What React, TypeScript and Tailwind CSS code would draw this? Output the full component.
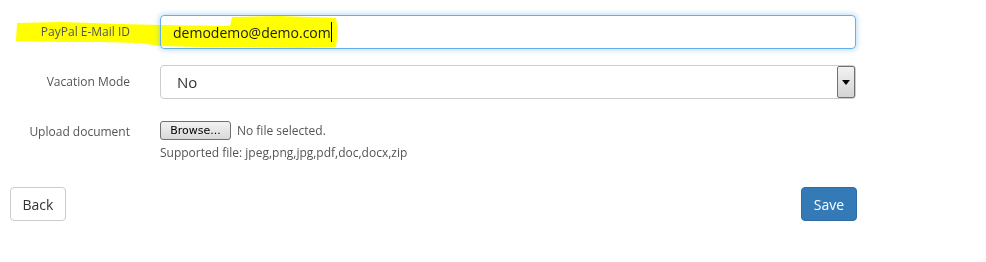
import React from "react";

const font = { fontFamily: '"Open Sans", "Noto Sans", sans-serif' };

function Label({ children }: { children: React.ReactNode }) {
  return (
    <div className="w-[145px] shrink-0 pr-[15px] text-right text-[12px] text-[#555]">
      {children}
    </div>
  );
}

export default function App() {
  return (
    <div className="relative w-[986px] h-[262px] bg-white font-['Open_Sans',sans-serif]" style={font}>
      {/* highlighter marks */}
      <svg className="absolute left-0 top-0 pointer-events-none mix-blend-multiply" width="360" height="60">
        <path
          d="M17 23 L60 22 L120 24 L160 25 L230 26 L232 17 L280 16 L336 18 L338 30 L336 47 L300 48 L240 47 L200 47 L160 46 L140 43 L100 42 L60 42 L16 41 Z"
          fill="#ffff00"
        />
      </svg>

      <div className="relative flex flex-col pt-[15px]">
        <div className="flex items-center h-[34px]">
          <Label>PayPal E-Mail ID</Label>
          <div className="w-[696px] ml-[15px] h-[34px] rounded-[4px] border border-[#66afe9] shadow-[0_0_6px_rgba(102,175,233,0.6)] flex items-center px-[12px] text-[14px] text-[#333]">
            <span className="text-[#1a1a1a]">demodemo@demo.com</span>
            <span className="w-px h-[20px] bg-black" />
          </div>
        </div>

        <div className="flex items-center h-[34px] mt-[16px]">
          <Label>Vacation Mode</Label>
          <div className="w-[696px] ml-[15px] h-[34px] rounded-[4px] border border-[#ccc] flex items-center text-[15px] text-[#333]">
            <span className="flex-1 pl-[16px]">No</span>
            <div className="w-[18px] h-[32px] border border-[#707070] rounded-[2px] bg-gradient-to-b from-[#f2f2f2] to-[#d4d4d4] flex items-center justify-center">
              <svg width="8" height="5" viewBox="0 0 8 5">
                <path d="M0 0 H8 L4 5 Z" fill="#000" />
              </svg>
            </div>
          </div>
        </div>

        <div className="flex items-start mt-[22px]">
          <div className="pt-[2px]">
            <Label>Upload document</Label>
          </div>
          <div className="ml-[15px] flex flex-col">
            <div className="flex items-center">
              <div className="w-[71px] h-[19px] rounded-[3px] border border-[#707070] bg-gradient-to-b from-[#f2f2f2] to-[#d9d9d9] text-black leading-[17px] flex items-center justify-center" style={{ fontFamily: '"DejaVu Sans", sans-serif', fontSize: 11 }}>
                Browse...
              </div>
              <span className="ml-[6px] text-[12px] text-[#555]">No file selected.</span>
            </div>
            <div className="mt-[4px] text-[12px] text-[#555]">Supported file: jpeg,png,jpg,pdf,doc,docx,zip</div>
          </div>
        </div>

        <div className="flex items-center mt-[25px] pl-[10px] w-[857px] justify-between">
          <button className="w-[56px] h-[34px] rounded-[4px] border border-[#ccc] bg-white text-[14px] text-[#333]">
            Back
          </button>
          <button className="w-[56px] h-[34px] rounded-[4px] border border-[#2e6da4] bg-[#337ab7] text-[14px] text-white">
            Save
          </button>
        </div>
      </div>
    </div>
  );
}
